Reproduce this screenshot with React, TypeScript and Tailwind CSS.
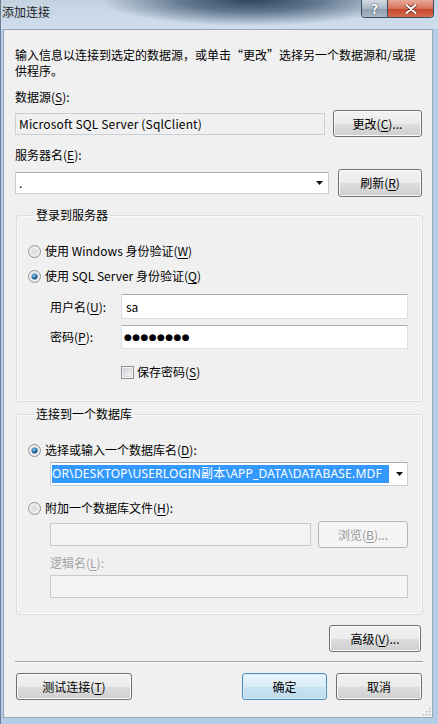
import React from 'react';

// Win7 "添加连接" dialog

function Radio({ checked }: { checked?: boolean }) {
  return (
    <svg width="13" height="13" viewBox="0 0 13 13" className="shrink-0">
      <defs>
        <radialGradient id="rbBg" cx="0.5" cy="0.5" r="0.6">
          <stop offset="0" stopColor="#d6d8db" />
          <stop offset="1" stopColor="#f8f8f8" />
        </radialGradient>
        <radialGradient id="rbDot" cx="0.4" cy="0.35" r="0.7">
          <stop offset="0" stopColor="#8ad1f7" />
          <stop offset="0.6" stopColor="#2c6fa5" />
          <stop offset="1" stopColor="#163e61" />
        </radialGradient>
      </defs>
      <circle cx="6.5" cy="6.5" r="6" fill="url(#rbBg)" stroke="#8e9093" />
      {checked && <circle cx="6.5" cy="6.5" r="3" fill="url(#rbDot)" />}
    </svg>
  );
}

function Check() {
  return (
    <svg width="13" height="13" viewBox="0 0 13 13" className="shrink-0">
      <defs>
        <linearGradient id="cbIn" x1="0" y1="0" x2="1" y2="1">
          <stop offset="0" stopColor="#cdd1d6" />
          <stop offset="1" stopColor="#f7f7f7" />
        </linearGradient>
      </defs>
      <rect x="0.5" y="0.5" width="12" height="12" fill="#f4f4f4" stroke="#8e9093" />
      <rect x="2.5" y="2.5" width="8" height="8" fill="url(#cbIn)" stroke="#c4c7cb" strokeWidth="0.5" />
    </svg>
  );
}

function Arrow() {
  return (
    <svg width="7" height="4" viewBox="0 0 7 4" className="shrink-0">
      <path d="M0 0h7L3.5 4z" fill="#111" />
    </svg>
  );
}

function Btn({
  children,
  className = '',
  kind = 'normal',
}: {
  children: React.ReactNode;
  className?: string;
  kind?: 'normal' | 'default' | 'disabled';
}) {
  const look =
    kind === 'default'
      ? 'border-[#4c8fbf] bg-[linear-gradient(#eaf4fa_0%,#dcedf7_50%,#c9e3f2_51%,#bcdcee_100%)] shadow-[inset_0_0_0_1px_#d2ecfa] text-black'
      : kind === 'disabled'
      ? 'border-[#b5b8bb] bg-[#f4f4f4] text-[#9a9a9a]'
      : 'border-[#707070] bg-[linear-gradient(#f2f2f2_0%,#ebebeb_50%,#dddddd_51%,#cfcfcf_100%)] shadow-[inset_0_0_0_1px_#fbfbfb] text-black';
  return (
    <div className={`flex h-[27px] shrink-0 items-center justify-center rounded-[3px] border ${look} ${className}`}>
      {children}
    </div>
  );
}

function M({ c }: { c: string }) {
  return <u className="underline-offset-[2px]">{c}</u>;
}

export default function App() {
  return (
    <div className="flex h-[724px] w-[438px] flex-col overflow-hidden border-l border-[#6c7e92] bg-[#b3cde8] font-['Noto_Sans_CJK_SC','Noto_Sans',sans-serif] text-[12px] leading-[16px] text-black">
      {/* title bar */}
      <div className="flex h-[29px] shrink-0 items-start bg-[radial-gradient(ellipse_150px_26px_at_250px_0px,#31455b_0%,#60768e_45%,rgba(190,208,226,0)_100%),linear-gradient(#c4d2e0,#cfdeee)]">
        <div className="pl-[1px] pt-[4px] text-[#1c1c1c]">添加连接</div>
        <div className="ml-auto mr-[4px] flex h-[18px] overflow-hidden rounded-b-[4px] border border-t-0 border-[#3d4d60]">
          <div className="flex w-[26px] items-center justify-center border-r border-[#3d4d60] bg-[linear-gradient(#d3dbe4,#aab6c4_50%,#8d9cae_51%,#a9b8c8)] text-[13px] font-bold leading-none text-white [text-shadow:0_0_2px_#333]">
            ?
          </div>
          <div className="flex w-[45px] items-center justify-center bg-[linear-gradient(#e9a99a,#d8715c_50%,#c8452b_51%,#d46a4d)]">
            <svg width="12" height="10" viewBox="0 0 12 10">
              <path d="M1.5 1 L10.5 9 M10.5 1 L1.5 9" stroke="#5a1a10" strokeWidth="3.4" strokeLinecap="round" />
              <path d="M1.5 1 L10.5 9 M10.5 1 L1.5 9" stroke="#fff" strokeWidth="2.2" strokeLinecap="round" />
            </svg>
          </div>
        </div>
      </div>

      {/* client area */}
      <div className="relative ml-[2px] mr-[5px] flex flex-1 flex-col border border-[#9aa6b3] bg-[#f0f0f0] pb-[15px] pl-[11px] pr-[9px] pt-[17px]">
        <p>输入信息以连接到选定的数据源，或单击“更改”选择另一个数据源和/或提供程序。</p>

        <div className="mt-[10px]">
          数据源(<M c="S" />):
        </div>
        <div className="mt-[5px] flex items-center justify-between">
          <div className="flex h-[22px] w-[310px] items-center border border-[#c9cfd6] bg-[#f0f0f0] pl-[3px] tracking-[0.15px]">
            Microsoft SQL Server (SqlClient)
          </div>
          <Btn className="mr-[1px] w-[89px]">
            更改(<M c="C" />)...
          </Btn>
        </div>

        <div className="mt-[10px]">
          服务器名(<M c="E" />):
        </div>
        <div className="mt-[6px] flex items-center justify-between">
          <div className="flex h-[22px] w-[314px] items-center border border-[#c9cfd6] border-t-[#abadb3] bg-white pl-[3px] pr-[5px]">
            <span>.</span>
            <span className="ml-auto">
              <Arrow />
            </span>
          </div>
          <Btn className="mr-[1px] h-[28px] w-[84px]">
            刷新(<M c="R" />)
          </Btn>
        </div>

        {/* group 1 */}
        <fieldset className="ml-[1px] mt-[10px] rounded-[3px] border border-[#d5dfe5] pb-[21px] pl-[11px] pr-[14px] shadow-[inset_0_0_0_1px_#fafafa]">
          <legend className="ml-[6px] px-[2px]">登录到服务器</legend>
          <div className="mt-[20px] flex items-center gap-[4px]">
            <Radio />
            <span>
              使用 Windows 身份验证(<M c="W" />)
            </span>
          </div>
          <div className="mt-[9px] flex items-center gap-[4px]">
            <Radio checked />
            <span>
              使用 SQL Server 身份验证(<M c="Q" />)
            </span>
          </div>
          <div className="mt-[10px] flex items-center pl-[22px]">
            <span className="w-[71px] shrink-0">
              用户名(<M c="U" />):
            </span>
            <div className="flex h-[25px] flex-1 items-center border border-[#dbdfe6] border-t-[#abadb3] bg-white pl-[4px]">
              sa
            </div>
          </div>
          <div className="mt-[6px] flex items-center pl-[22px]">
            <span className="w-[71px] shrink-0">
              密码(<M c="P" />):
            </span>
            <div className="flex h-[24px] flex-1 items-center border border-[#dbdfe6] border-t-[#abadb3] bg-white pl-[2px] font-['DejaVu_Sans',sans-serif] text-[9px] tracking-[0.4px]">
              ●●●●●●●●
            </div>
          </div>
          <div className="mt-[15px] flex items-center gap-[3px] pl-[93px]">
            <Check />
            <span>
              保存密码(<M c="S" />)
            </span>
          </div>
        </fieldset>

        {/* group 2 */}
        <fieldset className="ml-[1px] mt-[4px] rounded-[3px] border border-[#d5dfe5] pb-[16px] pl-[11px] pr-[14px] shadow-[inset_0_0_0_1px_#fafafa]">
          <legend className="ml-[6px] px-[2px]">连接到一个数据库</legend>
          <div className="mt-[20px] flex items-center gap-[4px]">
            <Radio checked />
            <span>
              选择或输入一个数据库名(<M c="D" />):
            </span>
          </div>
          <div className="ml-[22px] mt-[4px] flex h-[24px] items-center border border-[#c9cfd6] border-t-[#abadb3] bg-white pl-[1px] pr-[4px]">
            <span className="w-[337px] overflow-hidden whitespace-nowrap bg-[#3399ff] font-['Noto_Sans','Noto_Sans_CJK_SC',sans-serif] leading-[18px] tracking-[0.2px] text-white">
              OR\DESKTOP\USERLOGIN副本\APP_DATA\DATABASE.MDF
            </span>
            <span className="ml-auto">
              <Arrow />
            </span>
          </div>
          <div className="mt-[14px] flex items-center gap-[4px]">
            <Radio />
            <span>
              附加一个数据库文件(<M c="H" />):
            </span>
          </div>
          <div className="ml-[22px] mt-[5px] flex items-center justify-between">
            <div className="h-[23px] w-[261px] border border-[#c6cacf] bg-[#f4f4f4]" />
            <Btn kind="disabled" className="w-[90px]">
              浏览(<M c="B" />)...
            </Btn>
          </div>
          <div className="ml-[22px] mt-[7px] text-[#a3a3a3]">
            逻辑名(<M c="L" />):
          </div>
          <div className="ml-[22px] mt-[4px] h-[23px] border border-[#c6cacf] bg-[#f4f4f4]" />
        </fieldset>

        <Btn className="mr-[2px] mt-[10px] w-[92px] self-end">
          高级(<M c="V" />)...
        </Btn>

        <div className="mt-[9px] h-[2px] border-t border-b border-t-[#a0a0a0] border-b-white" />

        <div className="mt-[10px] flex items-center">
          <Btn className="ml-[1px] w-[116px]">
            测试连接(<M c="T" />)
          </Btn>
          <Btn kind="default" className="ml-auto w-[85px]">
            确定
          </Btn>
          <Btn className="ml-[9px] mr-[1px] w-[86px]">取消</Btn>
        </div>

        {/* size grip */}
        <svg width="10" height="10" viewBox="0 0 10 10" className="absolute bottom-[1px] right-[1px]">
          {[
            [8, 2],
            [5, 5],
            [8, 5],
            [2, 8],
            [5, 8],
            [8, 8],
          ].map(([x, y], i) => (
            <rect key={i} x={x} y={y} width="1.5" height="1.5" fill="#b9bcc0" />
          ))}
        </svg>
      </div>
      <div className="h-[6px] shrink-0" />
    </div>
  );
}
